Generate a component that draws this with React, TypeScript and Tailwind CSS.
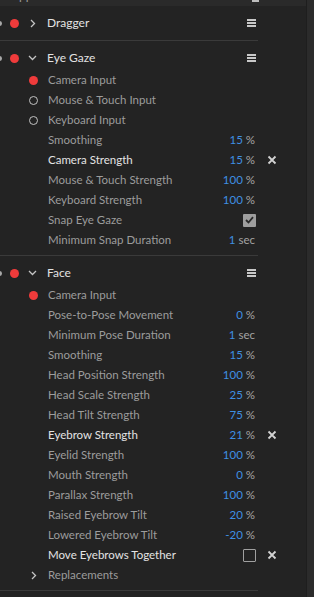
import React from "react";

type Row = {
  label: string;
  indicator?: "red" | "ring" | "chevron";
  value?: string;
  unit?: string;
  check?: boolean;
  bright?: boolean;
  remove?: boolean;
};

const eyeGaze: Row[] = [
  { label: "Camera Input", indicator: "red" },
  { label: "Mouse & Touch Input", indicator: "ring" },
  { label: "Keyboard Input", indicator: "ring" },
  { label: "Smoothing", value: "15", unit: "%" },
  { label: "Camera Strength", value: "15", unit: "%", bright: true, remove: true },
  { label: "Mouse & Touch Strength", value: "100", unit: "%" },
  { label: "Keyboard Strength", value: "100", unit: "%" },
  { label: "Snap Eye Gaze", check: true },
  { label: "Minimum Snap Duration", value: "1", unit: "sec" },
];

const face: Row[] = [
  { label: "Camera Input", indicator: "red" },
  { label: "Pose-to-Pose Movement", value: "0", unit: "%" },
  { label: "Minimum Pose Duration", value: "1", unit: "sec" },
  { label: "Smoothing", value: "15", unit: "%" },
  { label: "Head Position Strength", value: "100", unit: "%" },
  { label: "Head Scale Strength", value: "25", unit: "%" },
  { label: "Head Tilt Strength", value: "75", unit: "%" },
  { label: "Eyebrow Strength", value: "21", unit: "%", bright: true, remove: true },
  { label: "Eyelid Strength", value: "100", unit: "%" },
  { label: "Mouth Strength", value: "0", unit: "%" },
  { label: "Parallax Strength", value: "100", unit: "%" },
  { label: "Raised Eyebrow Tilt", value: "20", unit: "%" },
  { label: "Lowered Eyebrow Tilt", value: "-20", unit: "%" },
  { label: "Move Eyebrows Together", check: false, bright: true, remove: true },
  { label: "Replacements", indicator: "chevron" },
];

function Chevron({ open }: { open: boolean }) {
  return open ? (
    <svg width="9" height="6" viewBox="0 0 9 6" className="block">
      <path d="M1 1 L4.5 4.5 L8 1" fill="none" stroke="#c4c4c4" strokeWidth="1.3" />
    </svg>
  ) : (
    <svg width="6" height="9" viewBox="0 0 6 9" className="block">
      <path d="M1 1 L4.5 4.5 L1 8" fill="none" stroke="#c4c4c4" strokeWidth="1.3" />
    </svg>
  );
}

function Menu() {
  return (
    <div className="flex flex-col gap-[1.5px] w-[9px]">
      <div className="h-[1.5px] bg-[#c8c8c8]" />
      <div className="h-[1.5px] bg-[#c8c8c8]" />
      <div className="h-[1.5px] bg-[#c8c8c8]" />
    </div>
  );
}

function Cross() {
  return (
    <svg width="10" height="10" viewBox="0 0 10 10" className="block">
      <path d="M1.5 1.5 L8.5 8.5 M8.5 1.5 L1.5 8.5" stroke="#d2d2d2" strokeWidth="1.8" />
    </svg>
  );
}

function Header({ title, open }: { title: string; open: boolean }) {
  return (
    <div className="h-[29px] pt-[5px] flex items-center">
      <div className="w-[5px] h-[5px] rounded-full bg-[#a8a8a8] ml-[-3px]" />
      <div className="w-[9px] h-[9px] rounded-full bg-[#ef3b3b] ml-[8px]" />
      <div className="w-[9px] ml-[9px] flex justify-center">
        <Chevron open={open} />
      </div>
      <span className="ml-[10px] flex-1 text-[12px] text-[#e2e2e2]">{title}</span>
      <div className="mr-[2px]">
        <Menu />
      </div>
    </div>
  );
}

function Indicator({ kind }: { kind?: Row["indicator"] }) {
  if (kind === "red") return <div className="w-[9px] h-[9px] rounded-full bg-[#ef3b3b]" />;
  if (kind === "ring")
    return <div className="w-[9px] h-[9px] rounded-full border border-[#c2c2c2]" />;
  if (kind === "chevron")
    return (
      <div className="w-[9px] flex justify-center">
        <Chevron open={false} />
      </div>
    );
  return null;
}

function Line({ row }: { row: Row }) {
  return (
    <div className="h-[20px] flex items-center">
      <div className="w-[48px] flex justify-end pr-[10px]">
        <Indicator kind={row.indicator} />
      </div>
      <div className="flex-1 flex items-center justify-between">
        <span className={row.bright ? "text-[#e4e4e4]" : "text-[#9c9c9c]"}>{row.label}</span>
        {row.value != null && (
          <span>
            <span className="text-[#3f8fe2]">{row.value}</span>
            <span className="text-[#a4a4a4]"> {row.unit}</span>
          </span>
        )}
        {row.check === true && (
          <div className="w-[13px] h-[13px] mr-[-1px] rounded-[1px] bg-[#9e9e9e] flex items-center justify-center">
            <svg width="9" height="8" viewBox="0 0 9 8">
              <path d="M1 4 L3.5 6.5 L8 1.2" fill="none" stroke="#2a2a2a" strokeWidth="1.8" />
            </svg>
          </div>
        )}
        {row.check === false && (
          <div className="w-[13px] h-[13px] mr-[-1px] rounded-[1px] border-[1.5px] border-[#a0a0a0]" />
        )}
      </div>
      <div className="w-[51px] pl-[12px]">{row.remove && <Cross />}</div>
    </div>
  );
}

function Section({ title, open, rows }: { title: string; open: boolean; rows: Row[] }) {
  return (
    <div className="pb-[5px] border-b border-[#3a3a3a] w-[258px]">
      <Header title={title} open={open} />
      <div className="w-[306px]">
        {rows.map((r, i) => (
          <Line key={i} row={r} />
        ))}
      </div>
    </div>
  );
}

export default function App() {
  return (
    <div
      className="w-[314px] h-[597px] bg-[#232323] flex overflow-hidden text-[11.5px] leading-none"
      style={{ fontFamily: "Lato, 'Liberation Sans', sans-serif" }}
    >
      <div className="w-[306px] flex flex-col">
        <div className="h-[6px] bg-[#2a2a2a] overflow-hidden flex items-start">
          <span className="ml-[19px] mt-[-10px] text-[12px] text-[#9a9a9a]">pp</span>
          <div className="ml-[220px] w-[7px] h-[2px] bg-[#bdbdbd]" />
        </div>
        <div className="w-[306px]">
          <Section title="Dragger" open={false} rows={[]} />
          <Section title="Eye Gaze" open={true} rows={eyeGaze} />
          <Section title="Face" open={true} rows={face} />
        </div>
      </div>
      <div className="w-[8px] bg-[#2b2b2b] border-l border-[#1e1e1e]" />
    </div>
  );
}
